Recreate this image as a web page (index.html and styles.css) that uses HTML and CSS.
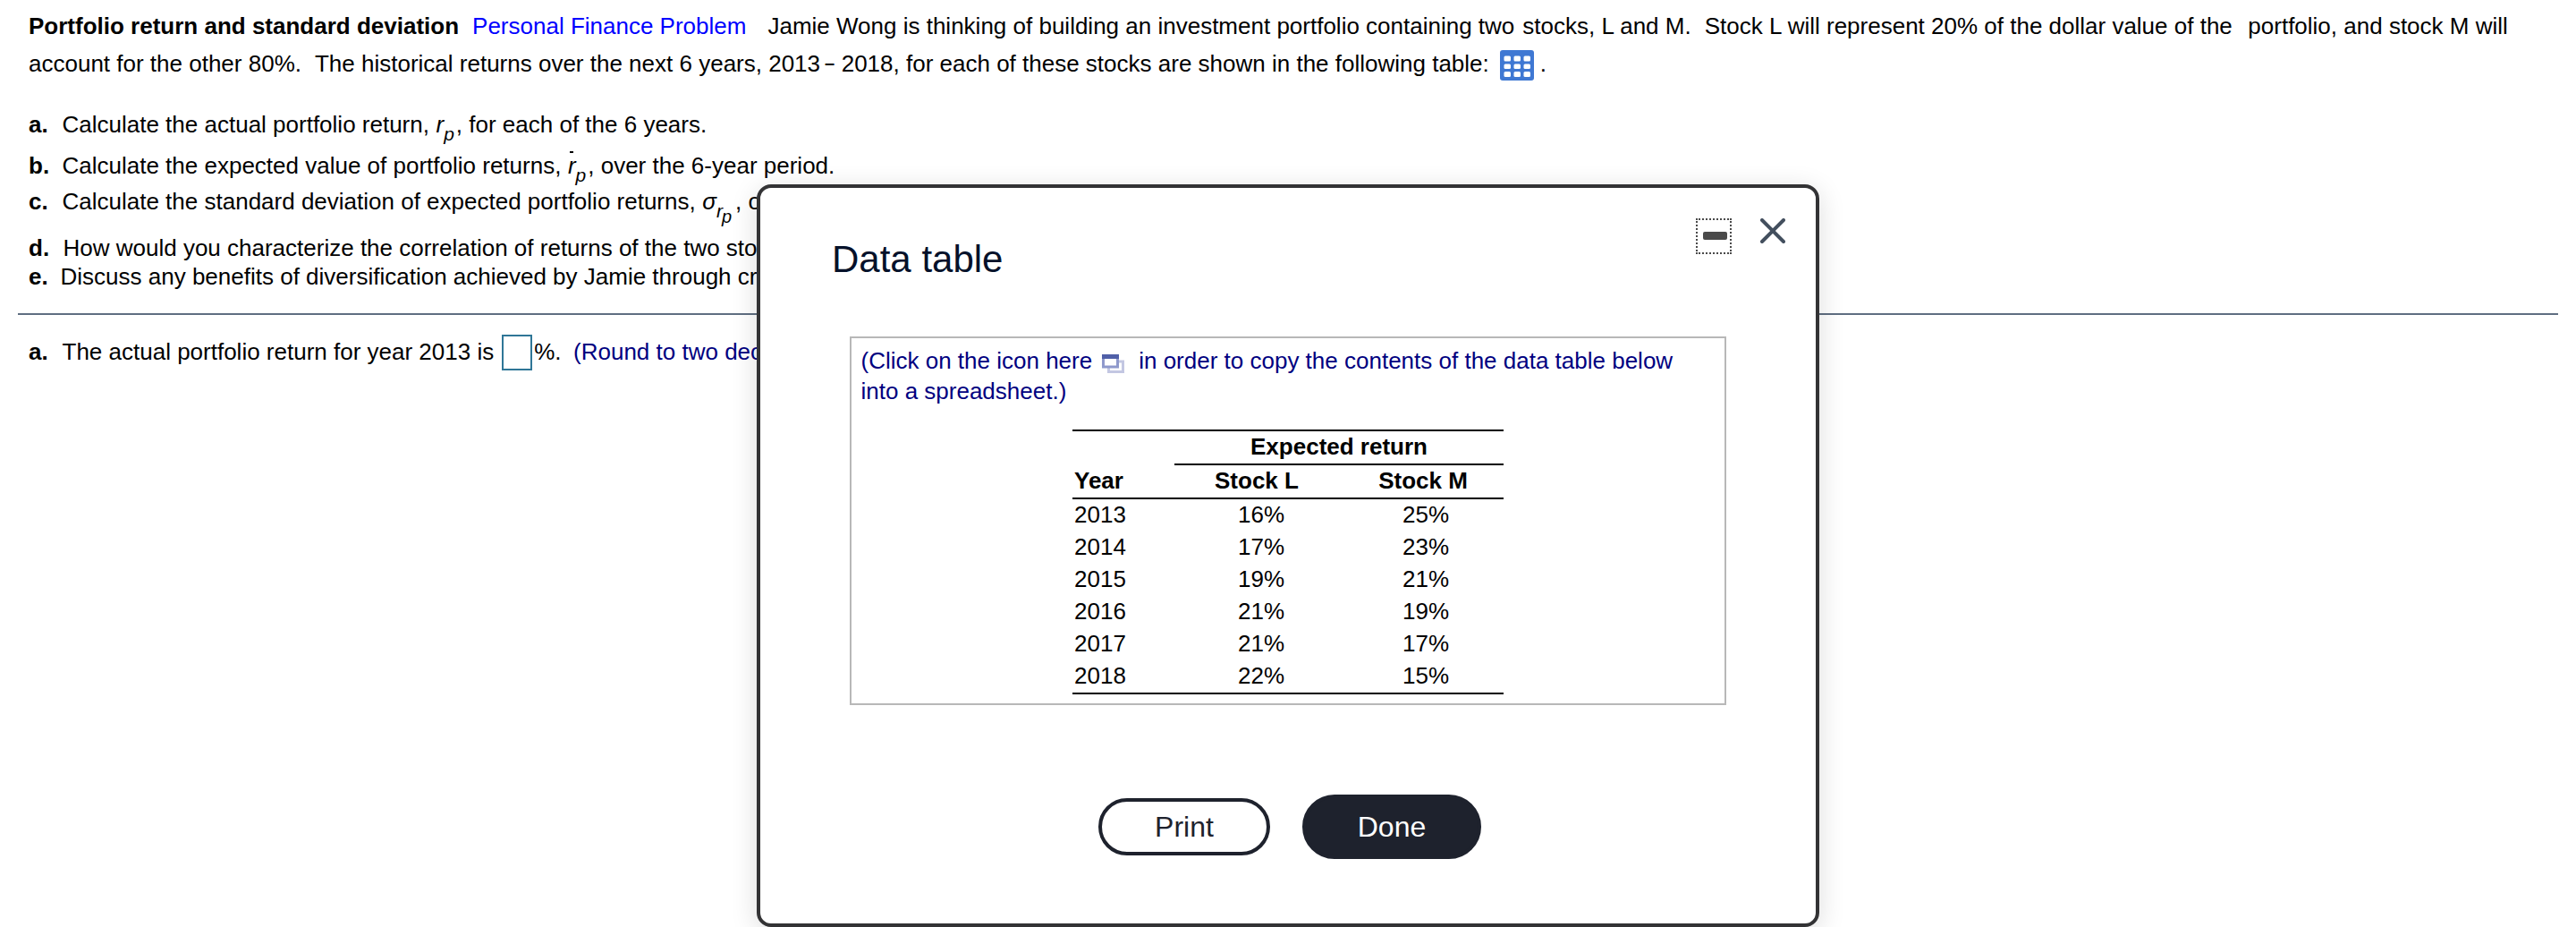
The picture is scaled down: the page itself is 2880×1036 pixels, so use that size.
FILE: index.html
```html
<!DOCTYPE html>
<html lang="en">
<head>
    <meta charset="UTF-8">
    <meta name="viewport" content="width=device-width, initial-scale=1.0">
    <title>Portfolio return and standard deviation</title>
    <link rel="stylesheet" href="styles.css">
</head>
<body>

<div class="question">
    <div class="intro">
        <div class="line">
            <b>Portfolio return and standard deviation</b>
            <span class="topic">Personal Finance Problem</span>
            <span class="after-topic">Jamie Wong is thinking of building an investment portfolio containing two</span>
            <span class="after-two">stocks, L and M.</span>
            <span class="sentence">Stock L will represent 20% of the dollar value of the</span>
            <span class="after-the">portfolio, and stock M will</span>
        </div>
        <div class="line">
            <span>account for the other 80%.</span>
            <span class="sentence">The historical returns over the next 6 years, 2013</span>
            <span class="dash">–</span>
            <span>2018, for each of these stocks are shown in the following table:</span>
            <svg class="table-icon" width="38" height="34" viewBox="0 0 38 34">
                <rect width="38" height="34" rx="3" fill="#3f78d3"/>
                <g fill="#fff">
                    <rect x="4.5" y="6.5" width="7.5" height="6" rx="1.5"/>
                    <rect x="15.5" y="6.5" width="7.5" height="6" rx="1.5"/>
                    <rect x="26.5" y="6.5" width="7.5" height="6" rx="1.5"/>
                    <rect x="4.5" y="15.5" width="7.5" height="5.5" rx="1.5"/>
                    <rect x="15.5" y="15.5" width="7.5" height="5.5" rx="1.5"/>
                    <rect x="26.5" y="15.5" width="7.5" height="5.5" rx="1.5"/>
                    <rect x="4.5" y="24" width="7.5" height="6" rx="1.5"/>
                    <rect x="15.5" y="24" width="7.5" height="6" rx="1.5"/>
                    <rect x="26.5" y="24" width="7.5" height="6" rx="1.5"/>
                </g>
            </svg>
            <span>.</span>
        </div>
    </div>

    <div class="parts">
        <p class="part-a"><b>a.</b>Calculate the actual portfolio return,<i class="r">r</i><i class="sub">p</i>, for each of the 6 years.</p>
        <p class="part-b"><b>b.</b>Calculate the expected value of portfolio returns,<i class="r dotted">r</i><i class="sub">p</i>, over the 6-year period.</p>
        <p class="part-c"><b>c.</b>Calculate the standard deviation of expected portfolio returns,<i class="sigma">σ</i><i class="sub">r</i><i class="subsub">p</i>, over the 6-year period.</p>
        <p class="part-d"><b>d.</b>How would you characterize the correlation of returns of the two stocks L and M?</p>
        <p class="part-e"><b>e.</b>Discuss any benefits of diversification achieved by Jamie through creation of the portfolio.</p>
    </div>
</div>

<div class="answer">
    <b>a.</b>
    <span>The actual portfolio return for year 2013 is</span>
    <input type="text" class="answer-box">
    <span>%.</span>
    <span class="hint">(Round to two decimal places.)</span>
</div>

<div class="modal">
    <div class="modal-header">
        <h2>Data table</h2>
        <div class="controls">
            <div class="minimize"><span></span></div>
            <svg class="close" width="28" height="28" viewBox="0 0 28 28">
                <path d="M2 2L26 26M26 2L2 26" stroke="#434f5e" stroke-width="4" stroke-linecap="round"/>
            </svg>
        </div>
    </div>

    <div class="data-box">
        <p>(Click on the icon here<svg class="copy-icon" width="25" height="21" viewBox="0 0 25 21">
            <rect x="7.5" y="8" width="16" height="11.5" fill="#fff" stroke="#c3c7e2" stroke-width="3"/>
            <rect x="1.5" y="2" width="16" height="12" fill="#fff" stroke="#8f99cc" stroke-width="3"/>
            <rect x="0" y="0" width="19" height="5" fill="#5060a8"/>
        </svg>in order to copy the contents of the data table below<br>into a spreadsheet.)</p>
        <table>
            <colgroup>
                <col class="col-year">
                <col class="col-stock">
                <col class="col-stock">
            </colgroup>
            <thead>
                <tr class="group"><th></th><th colspan="2">Expected return</th></tr>
                <tr class="heads"><th>Year</th><th>Stock L</th><th>Stock M</th></tr>
            </thead>
            <tbody>
                <tr><td>2013</td><td>16%</td><td>25%</td></tr>
                <tr><td>2014</td><td>17%</td><td>23%</td></tr>
                <tr><td>2015</td><td>19%</td><td>21%</td></tr>
                <tr><td>2016</td><td>21%</td><td>19%</td></tr>
                <tr><td>2017</td><td>21%</td><td>17%</td></tr>
                <tr><td>2018</td><td>22%</td><td>15%</td></tr>
            </tbody>
        </table>
    </div>

    <div class="actions">
        <button type="button" class="print">Print</button>
        <button type="button" class="done">Done</button>
    </div>
</div>

</body>
</html>
```
FILE: styles.css
```css
* {
    box-sizing: border-box;
}

body {
    margin: 0;
    height: 1036px;
    overflow: hidden;
    background-color: #fff;
    color: #000;
    font-family: "Liberation Sans", Arial, sans-serif;
    font-size: 26px;
}

p {
    margin: 0;
}

/* Question text */
.question {
    margin: 0 20px;
    padding: 8px 0 26px 12px;
    height: 352px;
    border-bottom: 2px solid #5f6e81;
    white-space: nowrap;
}

.line {
    display: flex;
    height: 42px;
    line-height: 42px;
}

.topic {
    margin-left: 15px;
    color: #0000ff;
}

.after-topic {
    margin-left: 24px;
}

.after-two {
    margin-left: 9px;
}

.sentence {
    margin-left: 15px;
}

.after-the {
    margin-left: 17.5px;
}

.dash {
    margin: -1px 7.5px 0 5px;
    font-size: 20px;
    font-weight: bold;
}

.table-icon {
    margin: 6px 7px 0 12px;
}

.parts {
    padding-top: 32px;
}

.parts p {
    height: 30px;
    line-height: 30px;
}

.parts b {
    display: inline-block;
    width: 37.5px;
}

.parts .part-b {
    margin-top: 16px;
}

.parts .part-c {
    margin-top: 10px;
}

.parts .part-d {
    margin-top: 22px;
}

.parts .part-e {
    margin-top: 2px;
}

.parts .part-d b {
    width: 38.5px;
}

.parts .part-e b {
    width: 35.5px;
}

.r {
    margin-left: 7.5px;
}

.dotted {
    position: relative;
}

.dotted::after {
    content: "";
    position: absolute;
    left: 2px;
    top: -1px;
    width: 4px;
    height: 2px;
    background-color: #000;
}

.sub,
.subsub {
    font-size: 21px;
    line-height: 0;
    vertical-align: -8.5px;
}

.sub {
    margin-right: 2px;
}

.sigma {
    margin-left: 7.5px;
}

.sigma + .sub {
    margin-right: -1px;
    vertical-align: -9px;
}

.subsub {
    margin-right: 4px;
    font-size: 20px;
    vertical-align: -15px;
}

/* Answer line */
.answer {
    display: flex;
    padding: 22px 0 0 32px;
    line-height: 38px;
    height: 62px;
    white-space: nowrap;
}

.answer b {
    width: 37.5px;
}

.answer-box {
    width: 34px;
    height: 40px;
    margin: 0 2px 0 9px;
    border: 2px solid #2f7697;
    background-color: #fff;
}

.hint {
    margin-left: 13.5px;
    color: #000080;
}

/* Modal over the question */
.modal {
    position: absolute;
    left: 846px;
    top: 206px;
    width: 1188px;
    height: 830px;
    border: 4px solid #333335;
    border-radius: 16px;
    background-color: #fff;
    box-shadow: 0 6px 30px rgba(0, 0, 0, 0.14);
}

.modal-header {
    display: flex;
    justify-content: space-between;
    height: 166px;
    padding: 34px 34px 0 80px;
}

.modal-header h2 {
    margin: 21px 0 0;
    font-size: 42px;
    font-weight: normal;
    line-height: 50px;
    color: #05112a;
}

.controls {
    display: flex;
    align-items: flex-start;
    gap: 32px;
}

.minimize {
    width: 40px;
    height: 40px;
    padding: 13px 0 0 6px;
    border: 2px dotted #4a4a4a;
}

.minimize span {
    display: block;
    width: 27px;
    height: 9px;
    border-radius: 2px;
    background-color: #4a4a4a;
}

.data-box {
    height: 412px;
    margin: 0 100px;
    padding: 8px 0 0 10.5px;
    border: 2px solid #b8b8b8;
}

.data-box p {
    line-height: 34px;
    height: 68px;
    color: #000080;
    white-space: nowrap;
}

.copy-icon {
    margin: 0 16.5px 0 10.5px;
    vertical-align: -5px;
}

table {
    width: 482px;
    margin: 26px 0 0 236.5px;
    table-layout: fixed;
    border-spacing: 0;
    border-top: 2px solid #000;
    border-bottom: 2px solid #000;
}

.col-year {
    width: 114px;
}

.col-stock {
    width: 184px;
}

th,
td {
    height: 36px;
    padding: 0 0 2px;
    line-height: 34px;
    text-align: center;
}

th:first-child,
td:first-child {
    padding-left: 2px;
    text-align: left;
}

td + td {
    padding-left: 10px;
}

.group th,
.heads th {
    height: 38px;
}

.group th + th,
.heads th {
    border-bottom: 2px solid #000;
}

.heads th:last-child {
    padding-left: 4px;
}

.actions {
    display: flex;
    justify-content: center;
    align-items: center;
    gap: 36px;
    margin-top: 100px;
    padding-left: 4px;
}

.actions button {
    padding: 0;
    border: 4px solid #1e222d;
    border-radius: 36px;
    font-family: inherit;
    font-size: 32px;
}

.actions .print {
    width: 192px;
    height: 64px;
    background-color: #fff;
    color: #1e222d;
}

.actions .done {
    width: 200px;
    height: 72px;
    background-color: #1e222d;
    color: #fff;
}
```
